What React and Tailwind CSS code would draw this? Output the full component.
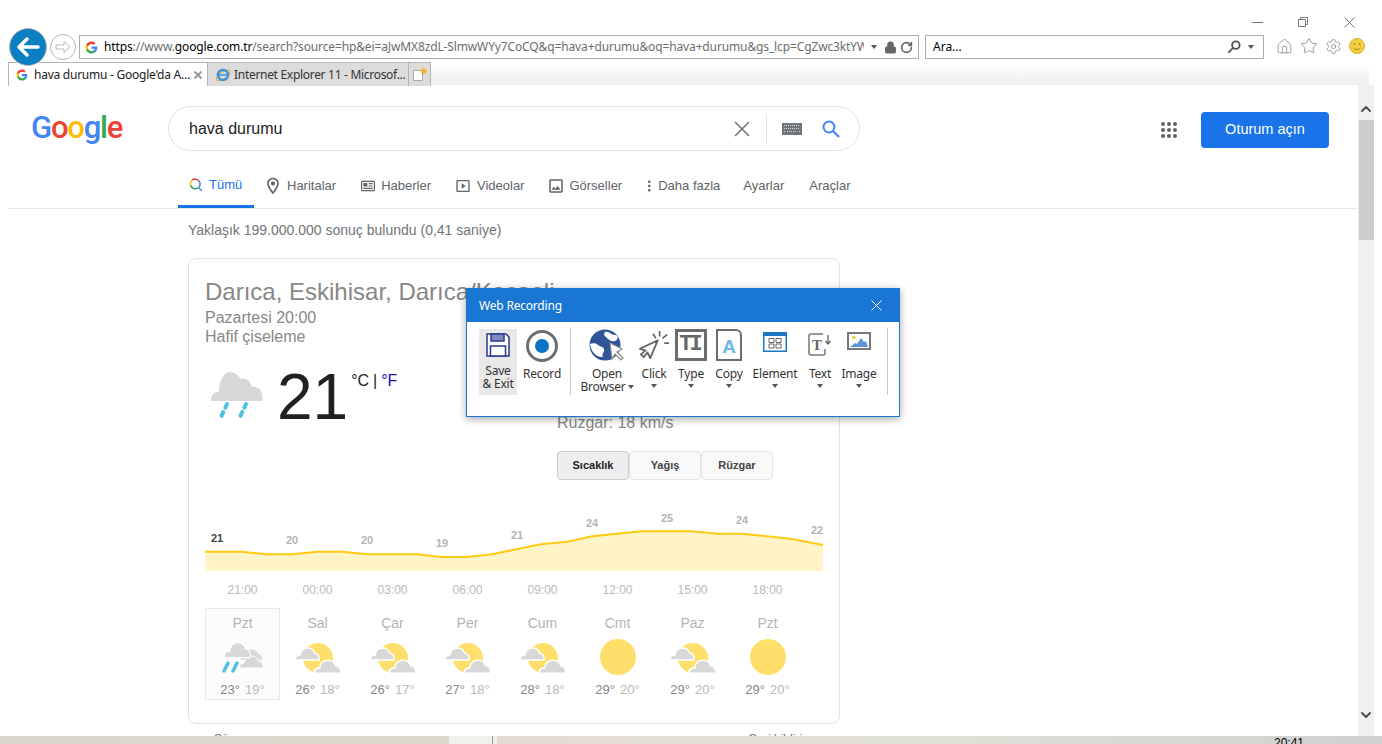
import React from 'react';
import { X, Home, Star, Settings, RotateCw, Lock, ChevronUp, ChevronDown } from 'lucide-react';

const GoogleG = ({ size = 14 }) => (
  <svg width={size} height={size} viewBox="0 0 24 24" className="shrink-0">
    <path fill="#4285F4" d="M22.56 12.25c0-.78-.07-1.53-.2-2.25H12v4.26h5.92c-.26 1.37-1.04 2.53-2.21 3.31v2.77h3.57c2.08-1.92 3.28-4.74 3.28-8.09z" />
    <path fill="#34A853" d="M12 23c2.97 0 5.46-.98 7.28-2.66l-3.57-2.77c-.98.66-2.23 1.06-3.71 1.06-2.86 0-5.29-1.93-6.16-4.53H2.18v2.84C3.99 20.53 7.7 23 12 23z" />
    <path fill="#FBBC05" d="M5.84 14.09c-.22-.66-.35-1.36-.35-2.09s.13-1.43.35-2.09V7.07H2.18C1.43 8.55 1 10.22 1 12s.43 3.45 1.18 4.93l2.85-2.22.81-.62z" />
    <path fill="#EA4335" d="M12 5.38c1.62 0 3.06.56 4.21 1.64l3.15-3.15C17.45 2.09 14.97 1 12 1 7.7 1 3.99 3.47 2.18 7.07l3.66 2.84c.87-2.6 3.3-4.53 6.16-4.53z" />
  </svg>
);

const Caret = ({ className = '' }) => (
  <span className={`inline-block w-0 h-0 border-l-[3.5px] border-r-[3.5px] border-t-[4px] border-l-transparent border-r-transparent border-t-[#555] ${className}`} />
);

const CLOUD = 'M0 14c0-3 2-5 5-5 .6-4 3.5-7 7.5-7 3.5 0 6 2 7 5 3 0 5 3.5 4.5 7z';

const RainIcon = () => (
  <svg width="54" height="50" viewBox="0 0 54 50">
    <path fill="#d8d8d8" d="M1 30c-.5-5 3-9.500 8-9.500C9 9 14 1 20 1c5.500 0 9 4 10.500 7 5-1.500 10 1.500 11 7.500 6-.5 11 4 11 10 0 2-.2 3.500-.5 4.500z" />
    <path stroke="#4fc1e3" strokeWidth="4" strokeLinecap="round" strokeDasharray="4 5" d="M17 33L11 46M36 33L30 46" fill="none" />
  </svg>
);

const SmallRainIcon = () => (
  <svg width="46" height="34" viewBox="0 0 46 34">
    <g transform="translate(20 6) scale(.95)"><path fill="#d8d8d8" stroke="#fff" d={CLOUD} /></g>
    <g transform="translate(19 13)"><path fill="#d8d8d8" stroke="#fff" d={CLOUD} /></g>
    <g transform="translate(4 -1) scale(1.1 1.25)"><path fill="#d8d8d8" stroke="#fff" d={CLOUD} /></g>
    <path stroke="#4fc1e3" strokeWidth="3.500" strokeLinecap="round" d="M8 22L4 30M17 22L13 30" fill="none" />
  </svg>
);

const PartlyIcon = () => (
  <svg width="46" height="31" viewBox="0 0 46 31">
    <circle cx="23" cy="15" r="15" fill="#ffdf6b" />
    <g transform="translate(0 3)"><path fill="#d8d8d8" stroke="#fff" strokeWidth="1.500" d={CLOUD} /></g>
    <g transform="translate(19 15) scale(1.12 1.1)"><path fill="#d8d8d8" stroke="#fff" strokeWidth="1.500" d={CLOUD} /></g>
  </svg>
);

const SunIcon = () => <div className="w-9 h-9 rounded-full bg-[#ffdf6b] mt-[-2px]" />;

const line = [[0, 46.7], [36.8, 46.7], [62.5, 49.3], [87.4, 49.3], [112.3, 46.7], [137.2, 46.7], [162.4, 49.3], [212.2, 49.3], [237, 52], [262, 52], [286.8, 49.3], [312.5, 44], [337.4, 39], [362.3, 36.7], [387.2, 31.3], [436.9, 26.3], [486.7, 26.3], [512.4, 28.7], [537.2, 28.7], [562.1, 31.3], [587, 34], [618, 40]];
const linePts = line.map((p) => p.join(',')).join(' ');
const labels = [[12, 33, '21'], [87, 35, '20'], [162, 35, '20'], [237, 38, '19'], [312, 30, '21'], [387, 18, '24'], [462, 13, '25'], [537, 15, '24'], [612, 25, '22']];
const times = ['21:00', '00:00', '03:00', '06:00', '09:00', '12:00', '15:00', '18:00'];
const days = [
  { d: 'Pzt', hi: '23°', lo: '19°', icon: SmallRainIcon, active: true },
  { d: 'Sal', hi: '26°', lo: '18°', icon: PartlyIcon },
  { d: 'Çar', hi: '26°', lo: '17°', icon: PartlyIcon },
  { d: 'Per', hi: '27°', lo: '18°', icon: PartlyIcon },
  { d: 'Cum', hi: '28°', lo: '18°', icon: PartlyIcon },
  { d: 'Cmt', hi: '29°', lo: '20°', icon: SunIcon },
  { d: 'Paz', hi: '29°', lo: '20°', icon: PartlyIcon },
  { d: 'Pzt', hi: '29°', lo: '20°', icon: SunIcon },
];

const Chrome = () => (
  <div className="h-[85px] shrink-0 flex flex-col font-['Noto_Sans',sans-serif]">
    <div className="h-[35px] flex justify-end items-center pt-[9px]">
      <svg width="11" height="1" viewBox="0 0 11 1" className="mr-[34px]"><path d="M0 .5h11" stroke="#777" /></svg>
      <svg width="12" height="12" viewBox="0 0 12 12" fill="none" stroke="#777" className="mr-[35px]"><path d="M1.500 3.500h7v7h-7zM3.500 3.500v-2h7v7h-2" /></svg>
      <svg width="11" height="11" viewBox="0 0 11 11" fill="none" stroke="#777" className="mr-[27px]"><path d="M.5.5l10 10M10.500.5l-10 10" /></svg>
    </div>
    <div className="h-[30px] flex pl-[9px] items-start">
      <div className="w-[38px] h-[38px] -mt-[7px] rounded-full bg-[#0a7fc2] border border-[#b8b8b8] flex items-center justify-center relative z-10 shrink-0">
        <svg width="24" height="22" viewBox="0 0 24 22" fill="none" stroke="#fff" strokeWidth="3.500" strokeLinecap="round" strokeLinejoin="round"><path d="M22 11H3M11 3l-8 8 8 8" /></svg>
      </div>
      <div className="w-[26px] h-[26px] -mt-[1px] ml-[3px] rounded-full border border-[#b5b5b5] flex items-center justify-center shrink-0">
        <svg width="16" height="14" viewBox="0 0 16 14" fill="none" stroke="#b8b8b8"><path d="M1 5h8V1.500L15 7l-6 5.500V9H1z" /></svg>
      </div>
      <div className="ml-[3px] w-[840px] h-[24px] border border-[#adadad] bg-white flex items-center pl-[5px] text-[12px] shrink-0">
        <GoogleG size={13} />
        <div className="ml-[6px] w-[760px] overflow-hidden whitespace-nowrap text-[#6d6d6d] tracking-[-0.13px] shrink-0"><span className="text-black">https</span>://www.<span className="text-black">google.com.tr</span>/search?source=hp&amp;ei=aJwMX8zdL-SlmwWYy7CoCQ&amp;q=hava+durumu&amp;oq=hava+durumu&amp;gs_lcp=CgZwc3ktYW</div>
        <Caret className="ml-[7px] shrink-0" />
        <Lock size={13} fill="#666" color="#666" className="ml-[7px] shrink-0" />
        <RotateCw size={13} color="#666" strokeWidth={3} className="ml-[3px] shrink-0" />
      </div>
      <div className="ml-[6px] w-[339px] h-[24px] border border-[#adadad] bg-white flex items-center pl-[7px] text-[12px] text-black shrink-0">
        <span className="flex-1">Ara...</span>
        <svg width="14" height="14" viewBox="0 0 15 15" fill="none" stroke="#555" strokeWidth="2"><circle cx="9.500" cy="5.500" r="4" /><path d="M6.500 8.500L1.500 13.500" /></svg>
        <Caret className="ml-[7px] mr-[9px]" />
      </div>
      <div className="ml-[12px] h-[24px] -mt-[1px] flex items-center gap-[7px] text-[#7a7a7a]">
        <Home size={17} strokeWidth={1} />
        <Star size={18} strokeWidth={1} />
        <Settings size={17} strokeWidth={1} />
        <svg width="16" height="16" viewBox="0 0 16 16"><circle cx="8" cy="8" r="7.500" fill="#f4cf3f" stroke="#d6ae2a" /><circle cx="5.500" cy="6" r="1" fill="#a98b25" /><circle cx="10.500" cy="6" r="1" fill="#a98b25" /><path d="M4.500 10c1.500 2 5.500 2 7 0" stroke="#a98b25" fill="none" /></svg>
      </div>
    </div>
    <div className="h-[20px] flex pl-[8px] text-[12px]">
      <div className="w-[200px] h-[24px] -mt-[3px] bg-white border border-b-0 border-[#b5b5b5] flex items-center pl-[7px] text-[#222] shrink-0 relative">
        <GoogleG size={12} />
        <span className="ml-[6px] flex-1 whitespace-nowrap tracking-[-0.25px]">hava durumu - Google'da A...</span>
        <svg width="8" height="8" viewBox="0 0 8 8" fill="none" stroke="#999" strokeWidth="2" className="mr-[5px]"><path d="M.5.5l7 7M7.500.5l-7 7" /></svg>
      </div>
      <div className="w-[200px] h-[24px] -mt-[3px] bg-[#dcdcdc] border-t border-[#b5b5b5] flex items-center pl-[7px] text-[#333] shrink-0 overflow-hidden">
        <svg width="16" height="16" viewBox="0 0 16 16" fill="none" className="shrink-0"><ellipse cx="8" cy="8.500" rx="8" ry="3.500" stroke="#e6a92e" transform="rotate(-35 8 8)" /><circle cx="8" cy="8" r="5" stroke="#3a94d8" strokeWidth="2.500" /><path d="M4 8h8" stroke="#3a94d8" strokeWidth="1.500" /></svg>
        <span className="ml-[3px] whitespace-nowrap tracking-[-0.3px]">Internet Explorer 11 - Microsof...</span>
      </div>
      <div className="w-[23px] h-[24px] -mt-[3px] bg-[#dcdcdc] border border-b-0 border-[#b5b5b5] flex items-center justify-center shrink-0">
        <svg width="18" height="18" viewBox="0 0 18 18"><path d="M2.500 4.500h9v10h-9z" fill="#fff" stroke="#aaa" /><path d="M12.500 1l.8 2 2-.8-.8 2 2 .8-2 .8.800 2-2-.8-.8 2-.8-2-2 .8.800-2-2-.8 2-.8-.8-2 2 .8z" fill="#f5b32e" /></svg>
      </div>
      <div className="w-[938px] h-[21px] -mt-[1px] bg-gradient-to-b from-white to-[#eeeeee]" />
    </div>
  </div>
);

const PinIcon = () => (
  <svg width="20" height="20" viewBox="0 0 24 24" fill="#5f6368" className="-mx-[3px]"><path d="M12 2C8.130 2 5 5.130 5 9c0 5.250 7 13 7 13s7-7.750 7-13c0-3.870-3.130-7-7-7zM7 9c0-2.760 2.240-5 5-5s5 2.240 5 5c0 2.880-2.880 7.190-5 9.880C9.920 16.210 7 11.850 7 9z" /><circle cx="12" cy="9" r="2.500" /></svg>
);
const NewsIcon = () => (
  <svg width="14" height="14" viewBox="0 0 24 24" fill="#5f6368"><path d="M22 3H2C.9 3 0 3.900 0 5v14c0 1.100.9 2 2 2h20c1.100 0 2-.9 2-2V5c0-1.100-.9-2-2-2zm0 16H2V5h20v14zM4 7h7v6H4zm9 0h7v2h-7zm0 4h7v2h-7zM4 15h16v2H4z" /></svg>
);
const VideoIcon = () => (
  <svg width="16" height="16" viewBox="0 0 24 24" fill="#5f6368" className="-mx-[1px]"><path d="M20 3H4C2.900 3 2 3.900 2 5v14c0 1.100.9 2 2 2h16c1.100 0 2-.9 2-2V5c0-1.100-.9-2-2-2zm0 16H4V5h16v14zM10 8v8l6-4z" /></svg>
);
const PictureIcon = () => (
  <svg width="18" height="18" viewBox="0 0 24 24" fill="#5f6368" className="-mx-[2px]"><path d="M19 5v14H5V5h14m0-2H5c-1.100 0-2 .9-2 2v14c0 1.100.9 2 2 2h14c1.100 0 2-.9 2-2V5c0-1.100-.9-2-2-2zm-4.860 8.860l-3 3.870L9 13.140 6 17h12l-3.860-5.140z" /></svg>
);
const DotsIcon = () => (
  <svg width="14" height="14" viewBox="0 0 14 14" fill="#5f6368"><rect x="6" y="1.500" width="2.500" height="2.500" rx="1" /><rect x="6" y="5.800" width="2.500" height="2.500" rx="1" /><rect x="6" y="10" width="2.500" height="2.500" rx="1" /></svg>
);

const tabs = [
  { name: 'Haritalar', icon: PinIcon, cls: 'ml-[12px] gap-[7px]' },
  { name: 'Haberler', icon: NewsIcon, cls: 'ml-[25px] gap-[6px]' },
  { name: 'Videolar', icon: VideoIcon, cls: 'ml-[25px] gap-[7px]' },
  { name: 'Görseller', icon: PictureIcon, cls: 'ml-[25px] gap-[6px]' },
  { name: 'Daha fazla', icon: DotsIcon, cls: 'ml-[20px] gap-[2px]' },
];

const GoogleHeader = () => (
  <>
    <div className="flex items-center pt-[21px] h-[66px] mb-[13px] pl-[23px]">
      <div className="w-[137px] font-['Roboto',sans-serif] font-medium text-[31px] leading-none tracking-[-1.2px] -mt-[3px] shrink-0">
        <span className="text-[#4285f4]">G</span><span className="text-[#ea4335]">o</span><span className="text-[#fbbc05]">o</span><span className="text-[#4285f4]">g</span><span className="text-[#34a853]">l</span><span className="text-[#ea4335]">e</span>
      </div>
      <div className="w-[692px] h-[45px] rounded-full border border-[#dfe1e5] flex items-center pl-[20px] text-[16px] text-[#222] shrink-0">
        <span className="flex-1">hava durumu</span>
        <X size={26} color="#70757a" strokeWidth={1.500} />
        <div className="w-px h-[28px] bg-[#dfe1e5] ml-[11px]" />
        <svg width="20" height="12" viewBox="0 0 20 12" className="ml-[15px]"><rect width="20" height="12" fill="#70757a" /><path d="M2 2.500h16M2 5.500h16M2 8.500h1M5 8.500h10M17 8.500h1" stroke="#d8d8d8" strokeDasharray="1 1" /></svg>
        <svg width="18" height="18" viewBox="0 0 18 18" fill="none" stroke="#4285f4" strokeWidth="2" className="ml-[20px] mr-[19px]"><circle cx="7" cy="7" r="5.500" /><path d="M11 11l6 6" strokeWidth="2.300" /></svg>
      </div>
      <div className="ml-[301px] mt-[3px] grid grid-cols-3 gap-[2px] shrink-0">
        {Array.from({ length: 9 }).map((_, i) => <div key={i} className="w-[4px] h-[4px] rounded-full bg-[#5f6368]" />)}
      </div>
      <div className="ml-[24px] mt-[3px] w-[128px] h-[36px] bg-[#1a73e8] rounded flex items-center justify-center text-white text-[14.5px] shrink-0">Oturum açın</div>
    </div>
    <div className="h-[45px] border-b border-[#e8eaed] flex pl-[170px] text-[13px] text-[#5f6368]">
      <div className="h-[44px] w-[76px] pl-[11px] flex items-center gap-[6px] border-b-[3px] border-[#1a73e8] text-[#1a73e8]">
        <svg width="14" height="14" viewBox="0 0 14 14" fill="none" strokeWidth="1.500"><path d="M9.500 9.500L13 13" stroke="#4285f4" /><path d="M10 3a5 5 0 0 0-7-.8" stroke="#ea4335" /><path d="M3 2.200a5 5 0 0 0-1.500 5" stroke="#fbbc05" /><path d="M1.500 7.200a5 5 0 0 0 8 2.300" stroke="#34a853" /><path d="M10 3a5 5 0 0 1 0 6" stroke="#4285f4" /></svg>
        Tümü
      </div>
      {tabs.map((t) => (
        <div key={t.name} className={`h-[43px] flex items-center ${t.cls}`}>
          <t.icon />
          {t.name}
        </div>
      ))}
      <div className="h-[43px] ml-[23px] flex items-center">Ayarlar</div>
      <div className="h-[43px] ml-[25px] flex items-center">Araçlar</div>
    </div>
  </>
);

const WeatherCard = () => (
  <div className="ml-[180px] mt-[18px] w-[652px] h-[466px] shrink-0 border border-[#dfe1e5] rounded-lg pl-[16px] pt-[18px]">
    <div className="text-[24px] leading-[30px] text-[#878787]">Darıca, Eskihisar, Darıca/Kocaeli</div>
    <div className="text-[16px] leading-[19px] text-[#878787] mt-[1px]">Pazartesi 20:00</div>
    <div className="text-[16px] leading-[19px] text-[#878787]">Hafif çiseleme</div>
    <div className="flex mt-[16px] h-[143px]">
      <div className="w-[352px] flex shrink-0">
        <div className="pl-[5px] w-[72px] mt-[9px] shrink-0"><RainIcon /></div>
        <div className="text-[64px] leading-[64px] text-[#212121] font-normal shrink-0 mt-[3px]">21</div>
        <div className="text-[16px] leading-[18px] text-[#212121] ml-[3px] mt-[10px] whitespace-nowrap tracking-[-0.2px]">°C | <span className="text-[#1a0dab]">°F</span></div>
      </div>
      <div className="flex flex-col pt-[51px]">
        <div className="text-[16px] leading-[20px] text-[#878787]">Rüzgar: 18 km/s</div>
        <div className="flex mt-[18px] text-[11px] font-bold text-[#444]">
          <div className="w-[72px] h-[29px] bg-[#eeeeee] border border-[#cccccc] rounded-sm flex items-center justify-center text-[#222]">Sıcaklık</div>
          <div className="w-[72px] h-[29px] bg-[#f8f8f8] border border-[#e4e4e4] rounded-sm flex items-center justify-center">Yağış</div>
          <div className="w-[72px] h-[29px] bg-[#f8f8f8] border border-[#e4e4e4] rounded-sm flex items-center justify-center">Rüzgar</div>
        </div>
      </div>
    </div>
    <svg width="620" height="67" viewBox="0 0 620 67" className="block">
      <polygon points={`0,66 ${linePts} 618,66`} fill="#fff3c8" />
      <polyline points={linePts} fill="none" stroke="#ffca10" strokeWidth="2" />
      {labels.map(([x, y, t], i) => (
        <text key={i} x={x} y={y + 4} textAnchor="middle" fontSize="11" fontWeight="700" fill={i === 0 ? '#444' : '#b4b4b4'} fontFamily="Liberation Sans">{t}</text>
      ))}
    </svg>
    <div className="grid grid-cols-[repeat(8,75px)] mt-[11px]">
      {times.map((t) => <div key={t} className="text-center text-[12px] leading-[14px] text-[#b9b9b9]">{t}</div>)}
    </div>
    <div className="grid grid-cols-[repeat(8,75px)] mt-[11px]">
      {days.map((d, i) => (
        <div key={i} className={`h-[92px] flex flex-col items-center border ${d.active ? 'border-[#e8e8e8] bg-[#fcfcfc]' : 'border-transparent'}`}>
          <div className="text-[14px] leading-[16px] text-[#b4b4b4] mt-[6px]">{d.d}</div>
          <div className="h-[36px] mt-[9px] flex items-center justify-center"><d.icon /></div>
          <div className="flex gap-[5px] text-[13px] leading-[16px] mt-[6px]">
            <span className="text-[#878787]">{d.hi}</span>
            <span className="text-[#b9b9b9]">{d.lo}</span>
          </div>
        </div>
      ))}
    </div>
  </div>
);

const tools = [
  { name: 'Open', name2: 'Browser', w: 'w-[56px] ml-[8px]', icon: (
    <svg width="36" height="32" viewBox="0 0 36 32"><circle cx="16" cy="16" r="15.500" fill="#2f5597" /><path d="M1 15c3-1 6-1 8 1s5 1 6 4-3 5-1 8c-6 1-12-5-13-13zM16 3c4-1 6 3 10 3s3 5 0 6-6-1-8-3-4-3-2-6z" fill="#fff" /><path d="M21 14l2 16 3-5 6 6 2-2-6-6 5-3z" fill="#fff" stroke="#8a8a8a" strokeWidth="1.200" /></svg>
  ) },
  { name: 'Click', w: 'w-[36px] ml-[1px]', caret: true, icon: (
    <svg width="30" height="32" viewBox="0 0 32 32" fill="none" stroke="#666" strokeWidth="2"><path d="M1 20l19-9-8 19-3-6-4 5-3-3 5-4z" strokeLinejoin="round" /><path d="M22 1v6M30 5l-5 4M32 14h-5M15 4l3 5" strokeWidth="1.800" /></svg>
  ) },
  { name: 'Type', w: 'w-[36px] ml-[1px]', caret: true, icon: (
    <div className="w-[32px] h-[32px] border-[3px] border-[#6d6d6d] flex items-center justify-center font-['Liberation_Mono',monospace] font-bold text-[22px] leading-none text-[#666] tracking-[-3px] pr-[3px]">TI</div>
  ) },
  { name: 'Copy', w: 'w-[38px] ml-[1px]', caret: true, icon: (
    <div className="relative w-[26px] h-[32px] border-[2px] border-[#6d6d6d] rounded-tr-[6px] flex items-end justify-center text-[#6fb7e8] font-bold text-[19px] leading-[24px] font-['Liberation_Sans',sans-serif]">A</div>
  ) },
  { name: 'Element', w: 'w-[48px] ml-[3px]', caret: true, icon: (
    <svg width="24" height="20" viewBox="0 0 24 20" className="mt-[3px]"><rect width="24" height="20" fill="#1c78c4" /><rect x="1.500" y="4" width="21" height="14.500" fill="#fff" /><path d="M6 6.500h5v4H6zM13 6.500h5v4h-5zM6 12h5v4H6zM13 12h5v4h-5z" fill="none" stroke="#666" /></svg>
  ) },
  { name: 'Text', w: 'w-[38px] ml-[2px]', caret: true, icon: (
    <svg width="24" height="24" viewBox="0 0 24 24" fill="none" className="mt-[4px]"><path d="M15 1H3a2 2 0 0 0-2 2v17a2 2 0 0 0 2 2h12a2 2 0 0 0 2-2v-4" stroke="#777" strokeWidth="1.500" /><text x="9" y="17" textAnchor="middle" fontFamily="Liberation Serif" fontWeight="700" fontSize="15" fill="#666">T</text><path d="M20 2v8M17.500 8l2.500 3 2.500-3" stroke="#666" strokeWidth="1.300" /></svg>
  ) },
  { name: 'Image', w: 'w-[38px] ml-[1px]', caret: true, icon: (
    <svg width="24" height="18" viewBox="0 0 24 18" className="mt-[3px]"><rect x="1" y="1" width="22" height="16" fill="#fff" stroke="#777" strokeWidth="2" /><circle cx="7" cy="5.500" r="1.800" fill="#f3c744" /><path d="M3 15l5-4 2 1 4-6 3 4 2-1 2 6z" fill="#5b95d6" /></svg>
  ) },
];

const Tool = ({ t }) => (
  <div className={`${t.w} flex flex-col items-center shrink-0`}>
    <div className="h-[36px] flex justify-center">{t.icon}</div>
    <div className="text-[12px] leading-[13px] mt-[2px] whitespace-nowrap tracking-[-0.2px]">{t.name}</div>
    {t.name2
      ? <div className="text-[12px] leading-[13px] whitespace-nowrap flex items-center gap-[2px] tracking-[-0.2px]">{t.name2}<Caret /></div>
      : <Caret className="mt-[4px]" />}
  </div>
);

const Recorder = () => (
  <div className="absolute left-[466px] top-[288px] w-[434px] h-[129px] bg-white border border-[#1976d2] shadow-[0_2px_8px_rgba(0,0,0,0.35)] z-20 font-['Noto_Sans',sans-serif] text-[#333]">
    <div className="h-[33px] bg-[#1976d2] text-white text-[12px] flex items-center pl-[12px] pr-[17px] justify-between tracking-[-0.2px]">
      Web Recording
      <svg width="11" height="11" viewBox="0 0 11 11" fill="none" stroke="#fff"><path d="M.5.5l10 10M10.500.5l-10 10" /></svg>
    </div>
    <div className="flex pl-[12px] pt-[7px]">
      <div className="w-[38px] h-[66px] bg-[#e8e8e8] flex flex-col items-center shrink-0">
        <svg width="24" height="24" viewBox="0 0 24 24" className="mt-[4px]" fill="none" stroke="#2b3a8c" strokeWidth="1.500"><path d="M1 1h19l3 3v19H1z" fill="#fff" /><rect x="5" y="1" width="13" height="7" fill="#7f89c4" /><rect x="4.500" y="13" width="15" height="10" fill="#fff" /></svg>
        <div className="text-[12px] leading-[13px] mt-[7px] text-center tracking-[-0.2px]">Save<br />&amp; Exit</div>
      </div>
      <div className="w-[40px] ml-[5px] flex flex-col items-center shrink-0">
        <div className="h-[36px] mt-[1px]"><div className="w-[32px] h-[32px] rounded-full border-[3px] border-[#6d6d6d] flex items-center justify-center"><div className="w-[14px] h-[14px] rounded-full bg-[#0a72c4]" /></div></div>
        <div className="text-[12px] leading-[13px] mt-[1px] tracking-[-0.2px]">Record</div>
      </div>
      <div className="w-px h-[67px] bg-[#c8c8c8] ml-[8px] -mt-[1px] shrink-0" />
      {tools.map((t) => <Tool key={t.name} t={t} />)}
      <div className="w-px h-[67px] bg-[#c8c8c8] ml-[9px] -mt-[1px] shrink-0" />
    </div>
  </div>
);

export default function App() {
  return (
    <div className="relative w-[1382px] h-[744px] overflow-hidden bg-white flex flex-col font-['Liberation_Sans',sans-serif]">
      <Chrome />
      <div className="flex-1 min-h-0 flex">
        <div className="ml-[8px] w-[1350px] shrink-0 overflow-hidden flex flex-col">
          <GoogleHeader />
          <div className="ml-[180px] mt-[11px] text-[14px] leading-[20px] text-[#70757a] shrink-0">Yaklaşık 199.000.000 sonuç bulundu (0,41 saniye)</div>
          <WeatherCard />
          <div className="ml-[206px] w-[598px] mt-[8px] flex justify-between text-[12px] leading-[14px] text-[#70757a] shrink-0">
            <span>Süre</span>
            <span>Geri bildirim</span>
          </div>
        </div>
        <div className="w-[16px] bg-[#f0f0f0] flex flex-col items-center shrink-0 text-[#505050]">
          <div className="h-[35px] flex items-center justify-center pt-[12px]"><ChevronUp size={16} strokeWidth={3} /></div>
          <div className="w-[15px] h-[120px] bg-[#cdcdcd]" />
          <div className="flex-1 flex items-end pb-[13px]"><ChevronDown size={16} strokeWidth={3} /></div>
        </div>
      </div>
      <div className="h-[8px] shrink-0 flex overflow-hidden">
        <div className="w-[449px] bg-gradient-to-r from-[#d9d6cc] to-[#dcd8cc]" />
        <div className="w-[44px] bg-[#f0f0ea] border-r border-[#999]" />
        <div className="w-[4px] bg-[#f0f0ea]" />
        <div className="flex-1 bg-gradient-to-r from-[#e4dcd4] via-[#e0e0d8] to-[#d0d0d0] pl-[777px] text-[12px] leading-[14px] text-black">20:41</div>
      </div>
      <Recorder />
    </div>
  );
}
